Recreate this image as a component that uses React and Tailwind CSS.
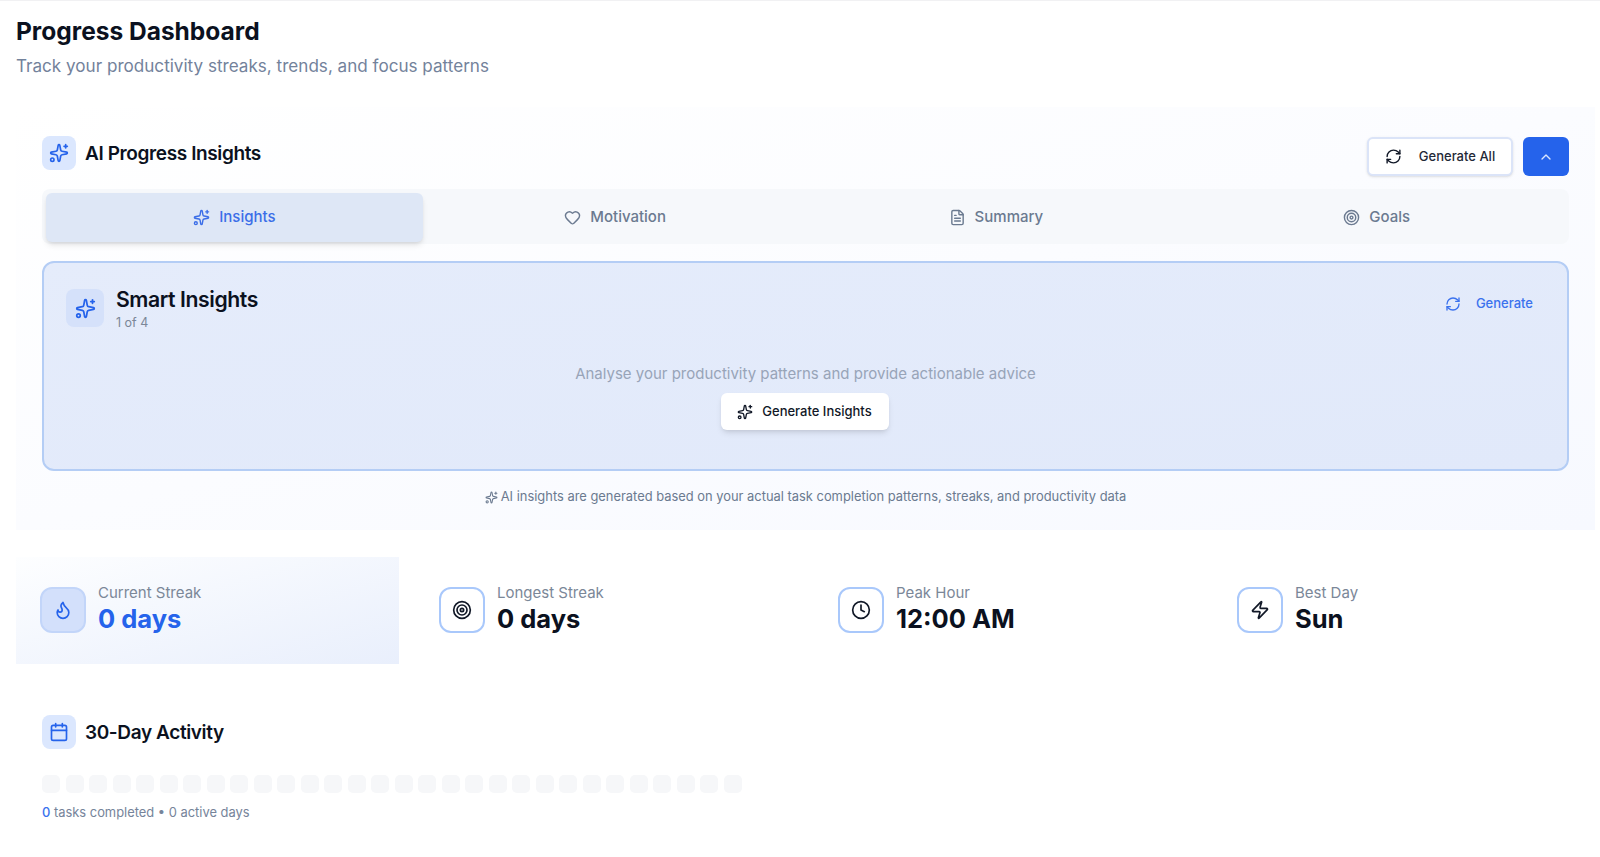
import { Sparkles, RefreshCw, ChevronUp, Heart, FileText, Target, Flame, Clock, Zap, Calendar } from 'lucide-react';

const tabs = [
  { label: 'Insights', icon: Sparkles, active: true },
  { label: 'Motivation', icon: Heart },
  { label: 'Summary', icon: FileText },
  { label: 'Goals', icon: Target },
];

const stats = [
  { label: 'Current Streak', value: '0 days', icon: Flame, active: true },
  { label: 'Longest Streak', value: '0 days', icon: Target },
  { label: 'Peak Hour', value: '12:00 AM', icon: Clock },
  { label: 'Best Day', value: 'Sun', icon: Zap },
];

function IconTile({ icon: Icon }) {
  return (
    <div className="w-[34px] h-[34px] shrink-0 rounded-lg bg-[#dbe7fe] flex items-center justify-center">
      <Icon size={20} className="text-[#2563eb]" />
    </div>
  );
}

function App() {
  return (
    <div className="h-[857px] overflow-hidden bg-white border-t border-[#f1f1f3] font-['Inter',sans-serif] pl-4 pr-[5px]">
      <header className="pt-[13px] h-[106px]">
        <h1 className="text-[24.5px] leading-[34px] font-bold text-[#0b1120]">Progress Dashboard</h1>
        <p className="text-[17.1px] leading-[26px] mt-[5px] text-[#73829b]">Track your productivity streaks, trends, and focus patterns</p>
      </header>

      <section className="h-[423px] px-[26px] pt-[29px] bg-gradient-to-br from-white to-[#f7f9ff]">
        <div className="flex items-start justify-between h-[41px]">
          <div className="flex items-center gap-[9px]">
            <IconTile icon={Sparkles} />
            <h2 className="text-[19px] mt-[2px] font-semibold tracking-[-0.02em] text-[#0b1120]">AI Progress Insights</h2>
          </div>
          <div className="flex items-center gap-[10px] mt-[1px]">
            <button className="h-[39px] w-[146px] flex items-center justify-center gap-[17px] bg-white border-2 border-[#dbe4f8] rounded-md shadow-sm text-[13px] font-medium text-[#1f2937]">
              <RefreshCw size={17} className="text-[#111827]" />
              Generate All
            </button>
            <button className="h-[39px] w-[46px] flex items-center justify-center bg-[#2563eb] rounded-md">
              <ChevronUp size={16} className="text-[#dbe7fe]" />
            </button>
          </div>
        </div>

        <div className="mt-[12px] h-[55px] grid grid-cols-4 gap-1 items-center p-[4px] rounded-lg bg-[#f6f8fb]">
          {tabs.map(tab => (
            <button
              key={tab.label}
              className={`h-[49px] flex items-center justify-center gap-[9px] rounded-md text-[15px] font-medium ${tab.active ? 'bg-[#dee7f6] shadow-md text-[#3b6ee8]' : 'text-[#6b7a90]'}`}
            >
              <tab.icon size={17} />
              {tab.label}
            </button>
          ))}
        </div>

        <div className="mt-[17px] h-[210px] border-2 border-[#b4cdf5] rounded-xl bg-gradient-to-br from-[#e5ecfb] to-[#e1e9fa] px-[22px] pt-[25px]">
          <div className="flex items-start justify-between">
            <div className="flex items-start gap-[12px]">
              <div className="w-[38px] h-[38px] mt-[1px] rounded-lg bg-[#d5e1fa] flex items-center justify-center">
                <Sparkles size={21} className="text-[#2563eb]" />
              </div>
              <div>
                <h3 className="text-[21.2px] leading-[24px] -mt-[1px] font-semibold tracking-[-0.02em] text-[#0b1120]">Smart Insights</h3>
                <p className="text-[12.5px] leading-[16px] mt-[4px] text-[#7b8798]">1 of 4</p>
              </div>
            </div>
            <button className="flex items-center gap-[15px] pr-[12px] pt-[6px] text-[13px] font-medium text-[#3b72ee]">
              <RefreshCw size={16} />
              Generate
            </button>
          </div>
          <div className="flex flex-col items-center mt-[32px]">
            <p className="text-[15px] leading-[22px] text-[#98a4b8]">Analyse your productivity patterns and provide actionable advice</p>
            <button className="mt-[8px] mr-[2px] w-[168px] h-[37px] flex items-center justify-center gap-[9px] bg-white rounded-md shadow-md text-[13px] font-medium text-[#111827]">
              <Sparkles size={16} />
              Generate Insights
            </button>
          </div>
        </div>

        <p className="mt-[17px] flex items-center justify-center gap-[3px] text-[12.9px] leading-[18px] text-[#6b7a90]">
          <Sparkles size={13} />
          AI insights are generated based on your actual task completion patterns, streaks, and productivity data
        </p>
      </section>

      <div className="mt-[27px] -mr-[1px] grid grid-cols-4 gap-4 h-[107px]">
        {stats.map(stat => (
          <div
            key={stat.label}
            className={`flex items-center gap-[12px] pl-[24px] pb-[1px] ${stat.active ? 'bg-gradient-to-br from-[#fdfeff] to-[#e9effc]' : ''}`}
          >
            <div className={`w-[46px] h-[46px] rounded-xl border-2 flex items-center justify-center ${stat.active ? 'bg-[#d3e0fb] border-[#c2d5f9] text-[#2563eb]' : 'bg-white border-[#a9c8fb] text-[#111827]'}`}>
              <stat.icon size={20} />
            </div>
            <div className="mb-[4px]">
              <p className="text-[15px] leading-[20px] text-[#7b8798]">{stat.label}</p>
              <p className={`text-[25.5px] leading-[30px] mt-[1px] font-bold ${stat.active ? 'text-[#2563eb]' : 'text-[#0b1120]'}`}>{stat.value}</p>
            </div>
          </div>
        ))}
      </div>

      <section className="pl-[26px] mt-[51px]">
        <div className="flex items-center gap-[9px]">
          <IconTile icon={Calendar} />
          <h2 className="text-[19px] mt-[2px] font-semibold tracking-[-0.02em] text-[#0b1120]">30-Day Activity</h2>
        </div>
        <div className="flex gap-[5.53px] mt-[26px]">
          {Array.from({ length: 30 }).map((_, i) => (
            <div key={i} className="w-[18px] h-[18px] rounded-[5px] bg-[#f6f7f9]" />
          ))}
        </div>
        <p className="mt-[11px] text-[12.9px] leading-[18px] text-[#76849a]">
          <span className="font-medium text-[#3b72ee]">0</span> tasks completed • 0 active days
        </p>
      </section>
    </div>
  );
}

export default App;
